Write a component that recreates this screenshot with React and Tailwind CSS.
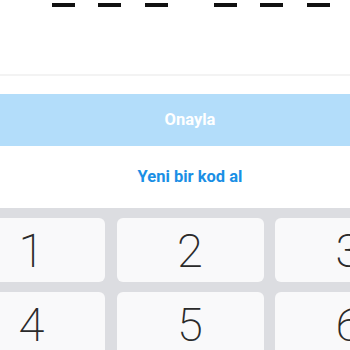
export default function App() {
  const keys = [["1", "2", "3"], ["4", "5", "6"]];
  return (
    <div className="w-[350px] h-[350px] overflow-hidden bg-white relative" style={{ fontFamily: "Roboto, 'Noto Sans', sans-serif" }}>
      <div className="w-[486px] ml-[-53px]">
        <div className="pt-[3px] flex items-start">
          <div className="ml-[105px] w-[23px] h-[4px] bg-[#111]" />
          <div className="ml-[23px] w-[23px] h-[4px] bg-[#111]" />
          <div className="ml-[24px] w-[23px] h-[4px] bg-[#111]" />
          <div className="ml-[46px] w-[23px] h-[4px] bg-[#111]" />
          <div className="ml-[23px] w-[23px] h-[4px] bg-[#111]" />
          <div className="ml-[24px] w-[23px] h-[4px] bg-[#111]" />
        </div>
        <div className="h-[67px]" />
        <div className="h-[2px] bg-[#f3f3f3]" />
        <div className="h-[18px]" />
        <div className="h-[52px] bg-[#b3ddfa] flex items-center justify-center">
          <span className="text-white font-bold text-[16.5px] leading-none">Onayla</span>
        </div>
        <div className="h-[62px] flex items-center justify-center">
          <span className="text-[#1a8fe5] font-bold text-[16.5px] leading-none">Yeni bir kod al</span>
        </div>
        <div className="bg-[#dcdde1] px-[11px] pt-[10px] pb-[10px] grid grid-cols-3 gap-x-[11.5px] gap-y-[10px]">
          {keys.flat().map((k) => (
            <div key={k} className="h-[64px] rounded-[6px] bg-[#f9f9fa] flex items-center justify-center">
              <span className="text-[47px] font-extralight text-[#2a2a2a] leading-none">{k}</span>
            </div>
          ))}
        </div>
      </div>
    </div>
  );
}
